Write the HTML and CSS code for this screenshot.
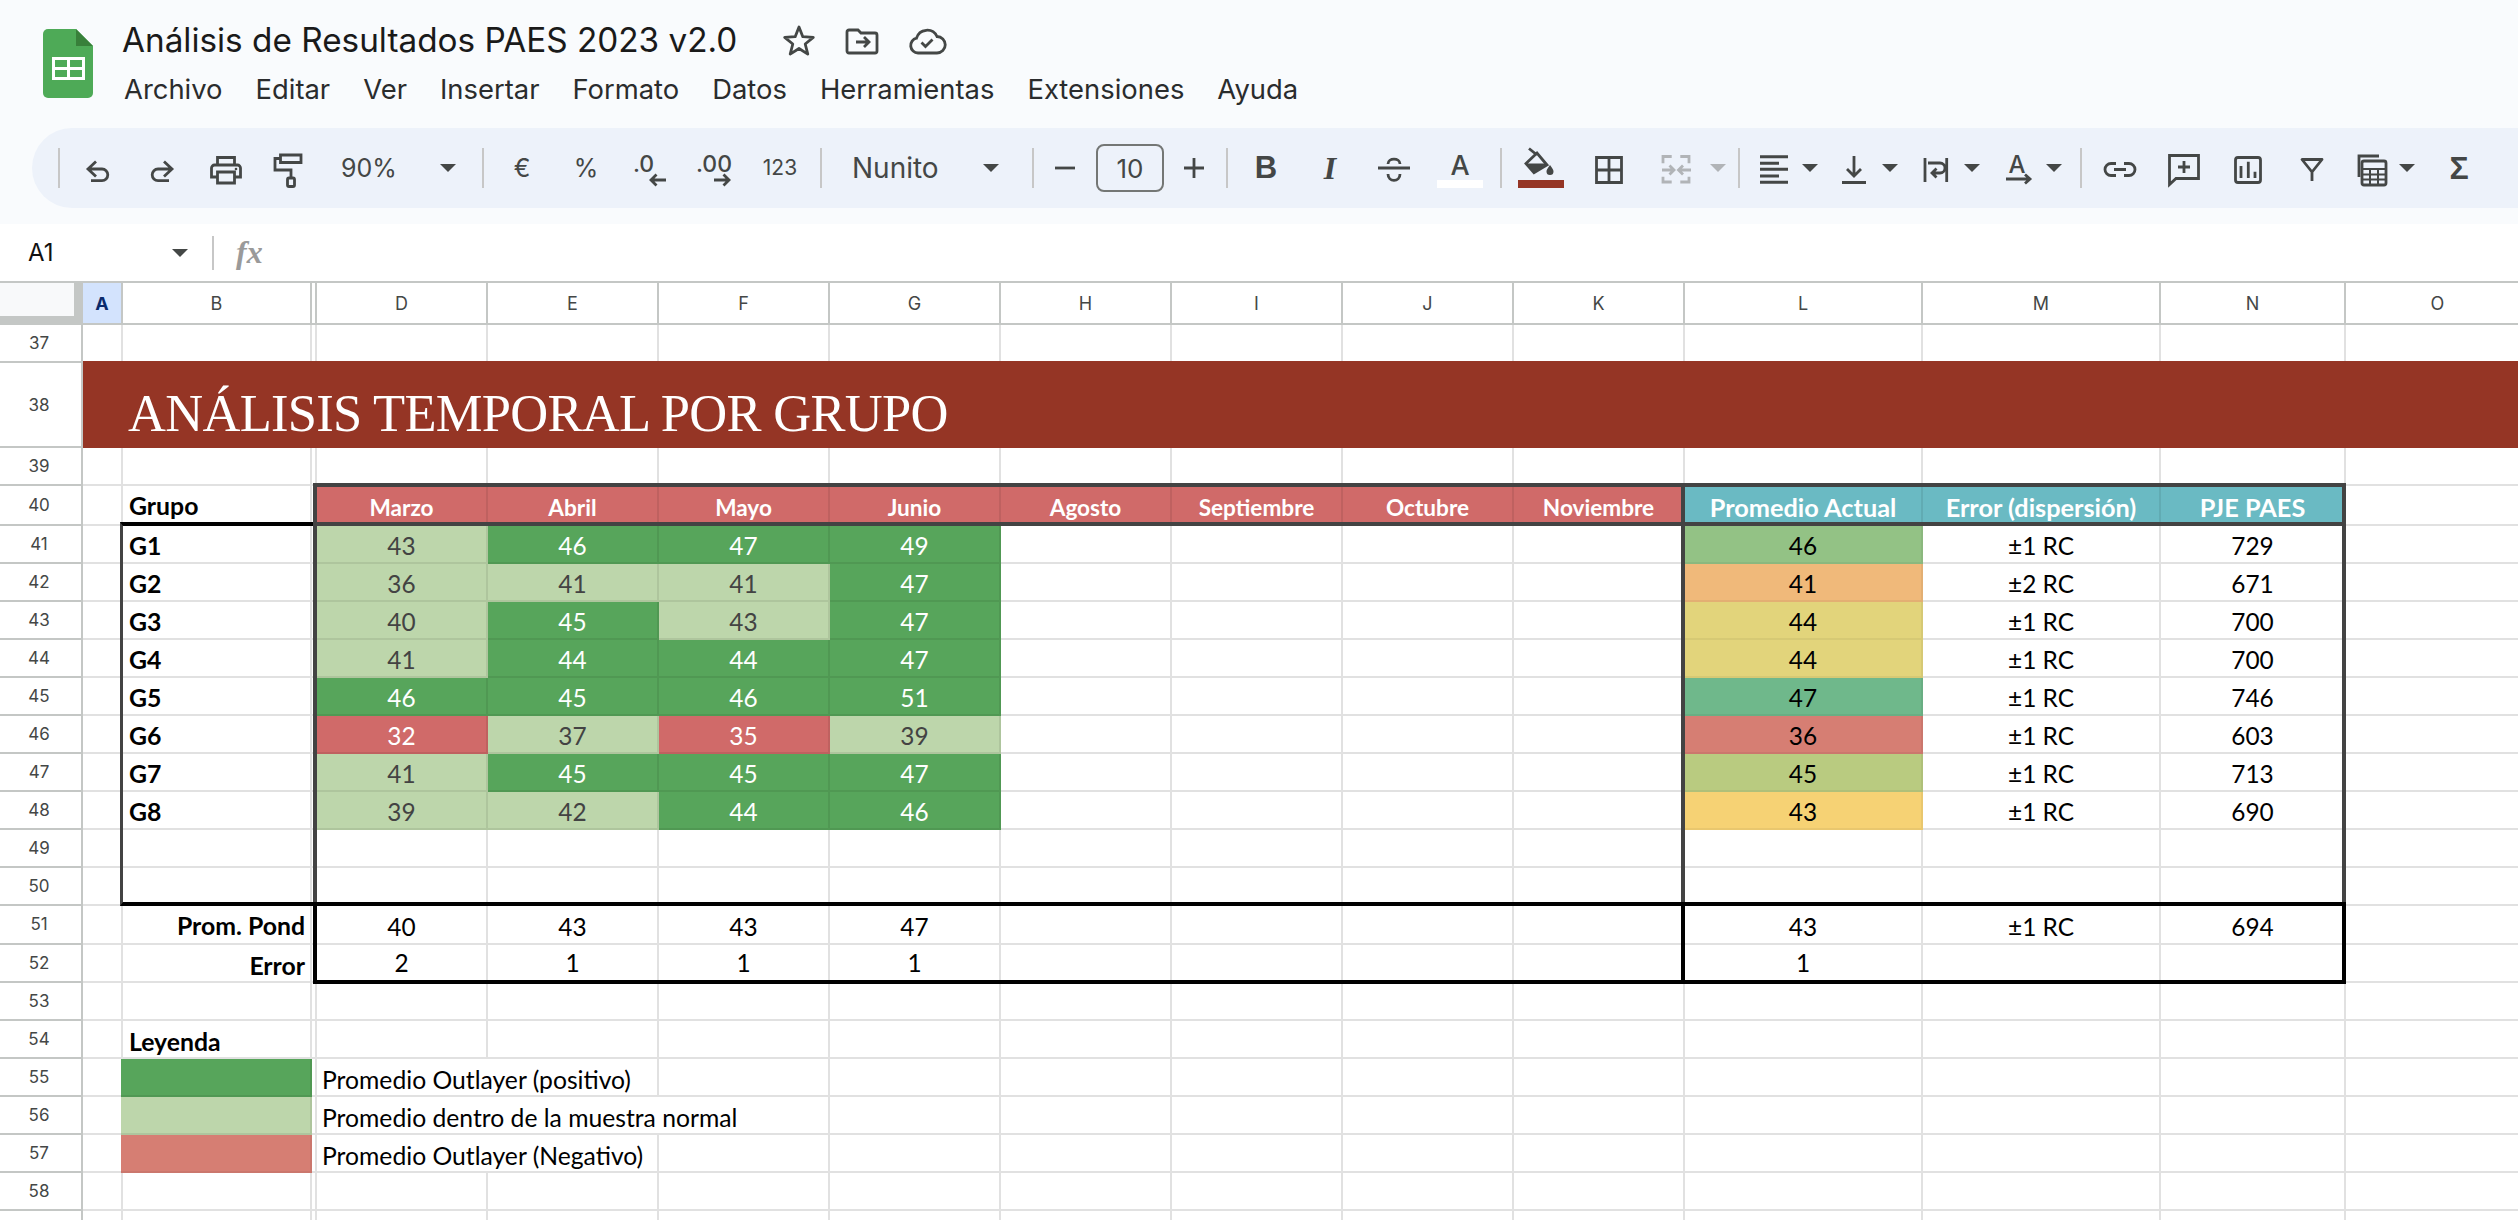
FILE: index.html
```html
<!DOCTYPE html>
<html lang="es">
<head>
<meta charset="utf-8">
<title>Análisis de Resultados PAES 2023 v2.0</title>
<link rel="stylesheet" href="styles.css">
</head>
<body>
<header class="top">
  <div class="head">
    <svg class="logo" viewBox="0 0 50 69"><path d="M5 0H33L50 17V64a5 5 0 0 1-5 5H5a5 5 0 0 1-5-5V5a5 5 0 0 1 5-5Z" fill="#4eaa57"/><path d="M33 0L50 17H33Z" fill="#38803a"/><path d="M9 28H42V51H9ZM12 31V38H24V31ZM27 31V38H39V31ZM12 41V48H24V41ZM27 41V48H39V41Z" fill="#fff" fill-rule="evenodd"/></svg>
    <div class="headcol">
      <div class="titlerow">
        <h1 class="title">Análisis de Resultados PAES 2023 v2.0</h1>
        <div class="titleicons">
          <svg class="ic" viewBox="0 0 40 40"><path class="s" stroke-linejoin="round" d="M20 6 23.8 15.7 34.3 16.4 26.2 23 28.8 33.1 20 27.5 11.2 33.1 13.8 23 5.7 16.4 16.2 15.7Z"/></svg>
          <svg class="ic" viewBox="0 0 40 40"><path class="s" d="M4 11a2 2 0 0 1 2-2h9l3 3h14a2 2 0 0 1 2 2v16a2 2 0 0 1-2 2H6a2 2 0 0 1-2-2ZM13 21H26M21 16l5 5-5 5"/></svg>
          <svg class="ic" viewBox="0 0 40 40"><path class="s" d="M11 32a7.5 7.5 0 0 1-1.5-14.8A11 11 0 0 1 30 15.5a8 8 0 0 1 0 16.5ZM14.5 21.5l4 4 7-7"/></svg>
        </div>
      </div>
      <nav class="menu"><span>Archivo</span><span>Editar</span><span>Ver</span><span>Insertar</span><span>Formato</span><span>Datos</span><span>Herramientas</span><span>Extensiones</span><span>Ayuda</span></nav>
    </div>
  </div>
  <div class="toolbar">
    <i class="sep first"></i>
    <div class="ti"><svg class="ic" viewBox="0 0 40 40"><path class="s" d="M18 13.5 10 21 18 28.5M10 21H24a5.8 5.8 0 0 1 0 11.6H13"/></svg></div>
    <div class="ti"><svg class="ic" viewBox="0 0 40 40"><path class="s" d="M22 13.5 30 21 22 28.5M30 21H16a5.8 5.8 0 0 0 0 11.6H27"/></svg></div>
    <div class="ti"><svg class="ic" viewBox="0 0 40 40"><path class="s" d="M11.5 17V9.5H28.5V17M11 29H5.5V20a3 3 0 0 1 3-3H31.5a3 3 0 0 1 3 3V29H29M11.5 24H28.5V35H11.5Z"/><circle cx="30" cy="21" r="1.3" class="f"/></svg></div>
    <div class="ti"><svg class="ic" viewBox="0 0 40 40"><path class="s" d="M9.5 10.5H5V22H21V30M10.5 7H31V14.5H10.5Z"/><rect class="s" x="17.5" y="30" width="7" height="8.500" rx="1.500"/></svg></div>
    <div class="ti zoomi"><span class="tt">90%</span><i class="caret"></i></div>
    <i class="sep"></i>
    <div class="ti"><span class="tt">€</span></div>
    <div class="ti"><span class="tt">%</span></div>
    <div class="ti"><svg class="ic" viewBox="0 0 40 40"><text class="dec" x="3" y="24">.0</text><path class="s" d="M36 32H21M26.500 26.500 21 32l5.500 5.500"/></svg></div>
    <div class="ti"><svg class="ic" viewBox="0 0 40 40"><text class="dec" x="2" y="24">.00</text><path class="s" d="M20 32H35M29.500 26.500 35 32l-5.500 5.500"/></svg></div>
    <div class="ti w68"><span class="tt t123">123</span></div>
    <i class="sep"></i>
    <div class="ti fonti"><span class="tt tfont">Nunito</span><i class="caret"></i></div>
    <i class="sep"></i>
    <div class="ti w50"><svg class="ic" viewBox="0 0 40 40"><path class="s" d="M10 20H30"/></svg></div>
    <div class="sizebox">10</div>
    <div class="ti w52"><svg class="ic" viewBox="0 0 40 40"><path class="s" d="M10 20H30M20 10V30"/></svg></div>
    <i class="sep"></i>
    <div class="ti"><span class="tt tb">B</span></div>
    <div class="ti"><span class="tt ti-i">I</span></div>
    <div class="ti"><svg class="ic" viewBox="0 0 40 40"><path class="s" d="M4 20H36M14 16C14 9.500 26 9.500 26 16M14 26C14 34.500 26 34.500 26 26"/></svg></div>
    <div class="ti w68"><svg class="ic wide" viewBox="0 0 46 40"><text class="lett" x="23" y="27">A</text><rect class="white" x="0" y="32" width="46" height="8"/></svg></div>
    <i class="sep"></i>
    <div class="ti w66"><svg class="ic wide" viewBox="0 0 46 40"><path class="s" d="M11 .5 19 7M8 15.500 19 5 29 17 16 24.700Z"/><path class="f" d="M8 15.500H29L16 24.700Z M32 17c-2.500 3.500-3.500 5-3.500 6.500a3.500 3.500 0 0 0 7 0c0-1.500-1-3-3.500-6.500Z"/><rect class="brick" x="0" y="32" width="46" height="8"/></svg></div>
    <div class="ti w70"><svg class="ic" viewBox="0 0 40 40"><path class="s" d="M7.500 9.500H32.500V34.500H7.500ZM20 9.500V34.500M7.500 22H32.500"/></svg></div>
    <div class="ti w88 cap-merge"><svg class="ic muted" viewBox="0 0 40 40"><path class="s" d="M15.700 8.500H7V15.300M24.300 8.500H33V15.300M15.700 34H7V28.700M24.300 34H33V28.700M6 22H18M13.500 17.500 18 22l-4.500 4.500M35 22H22.500M27 17.500 22.500 22l4.500 4.500"/></svg><i class="caret muted-c"></i></div>
    <i class="sep"></i>
    <div class="ti w80 cap-item"><svg class="ic" viewBox="0 0 40 40"><path class="s thick" d="M6 8.700H34M6 15.300H25M6 21.300H34M6 28H25M6 34.300H34"/></svg><i class="caret"></i></div>
    <div class="ti w82 cap-item"><svg class="ic" viewBox="0 0 40 40"><path class="s" d="M20 8V28M13 21l7 7 7-7M8 34.500H32"/></svg><i class="caret"></i></div>
    <div class="ti w82 cap-item"><svg class="ic" viewBox="0 0 40 40"><path class="s" d="M9 10V34M30.700 10V34M12 15H24a5 5 0 0 1 0 10H17M20.500 20.500 16 25l4.500 4.500"/></svg><i class="caret"></i></div>
    <div class="ti w84 cap-item"><svg class="ic" viewBox="0 0 40 40"><text class="lett small" x="19" y="25">A</text><path class="s" d="M8 31H31M27 26.500 32 31l-5 4.500"/></svg><i class="caret"></i></div>
    <i class="sep"></i>
    <div class="ti"><svg class="ic" viewBox="0 0 40 40"><path class="s" d="M16 15.500H11a6 6 0 0 0 0 12H16M24 15.500H29a6 6 0 0 1 0 12H24M14 21.500H26"/></svg></div>
    <div class="ti"><svg class="ic" viewBox="0 0 40 40"><path class="s" d="M5.500 7.500H34.500V30.500H12L5.500 36.500ZM20 13V25M14 19H26"/></svg></div>
    <div class="ti"><svg class="ic" viewBox="0 0 40 40"><rect class="s" x="7.500" y="9.500" width="25" height="25" rx="2.500"/><path class="s" d="M13 18V30M20.300 13.700V30M27 23.700V30"/></svg></div>
    <div class="ti"><svg class="ic" viewBox="0 0 40 40"><path class="s" stroke-linejoin="round" d="M10 11.500H30L20 24ZM20 24V33"/></svg></div>
    <div class="ti w80 cap-calc"><svg class="ic" viewBox="0 0 40 40"><path class="s" d="M28 8H8V29"/><rect class="s" x="11" y="13" width="24" height="24" rx="2"/><path class="s thin" d="M11 21H35M11 26.500H35M11 31.500H35M19 21V37M27 21V37"/></svg><i class="caret"></i></div>
    <div class="ti w70"><span class="tt sigma">Σ</span></div>
  </div>
</header>

<div class="fbar">
  <div class="namebox"><span>A1</span><i class="caret"></i></div>
  <i class="sep fsep"></i>
  <span class="fx">fx</span>
</div>

<main class="sheet">
  <div class="grid">
    <div class="row hdr">
      <div class="corner"></div>
      <div class="ch sel">A</div><div class="ch">B</div><div class="ch"></div><div class="ch">D</div><div class="ch">E</div><div class="ch">F</div><div class="ch">G</div><div class="ch">H</div><div class="ch">I</div><div class="ch">J</div><div class="ch">K</div><div class="ch">L</div><div class="ch">M</div><div class="ch">N</div><div class="ch">O</div>
    </div>
    <div class="row"><div class="rh">37</div><div class="c"></div><div class="c"></div><div class="c"></div><div class="c"></div><div class="c"></div><div class="c"></div><div class="c"></div><div class="c"></div><div class="c"></div><div class="c"></div><div class="c"></div><div class="c"></div><div class="c"></div><div class="c"></div><div class="c"></div></div>
    <div class="row"><div class="rh">38</div><div class="band">ANÁLISIS TEMPORAL POR GRUPO</div></div>
    <div class="row"><div class="rh">39</div><div class="c"></div><div class="c"></div><div class="c"></div><div class="c"></div><div class="c"></div><div class="c"></div><div class="c"></div><div class="c"></div><div class="c"></div><div class="c"></div><div class="c"></div><div class="c"></div><div class="c"></div><div class="c"></div><div class="c"></div></div>
    <div class="row"><div class="rh">40</div><div class="c"></div><div class="c lbl grupo">Grupo</div><div class="c"></div><div class="c hr">Marzo</div><div class="c hr">Abril</div><div class="c hr">Mayo</div><div class="c hr">Junio</div><div class="c hr">Agosto</div><div class="c hr">Septiembre</div><div class="c hr">Octubre</div><div class="c hr">Noviembre</div><div class="c ht">Promedio Actual</div><div class="c ht">Error (dispersión)</div><div class="c ht">PJE PAES</div><div class="c"></div></div>

    <div class="row"><div class="rh">41</div><div class="c"></div><div class="c lbl">G1</div><div class="c"></div><div class="c n lg">43</div><div class="c n g">46</div><div class="c n g">47</div><div class="c n g">49</div><div class="c"></div><div class="c"></div><div class="c"></div><div class="c"></div><div class="c n h46">46</div><div class="c n">±1 RC</div><div class="c n">729</div><div class="c"></div></div>
    <div class="row"><div class="rh">42</div><div class="c"></div><div class="c lbl">G2</div><div class="c"></div><div class="c n lg">36</div><div class="c n lg">41</div><div class="c n lg">41</div><div class="c n g">47</div><div class="c"></div><div class="c"></div><div class="c"></div><div class="c"></div><div class="c n h41">41</div><div class="c n">±2 RC</div><div class="c n">671</div><div class="c"></div></div>
    <div class="row"><div class="rh">43</div><div class="c"></div><div class="c lbl">G3</div><div class="c"></div><div class="c n lg">40</div><div class="c n g">45</div><div class="c n lg">43</div><div class="c n g">47</div><div class="c"></div><div class="c"></div><div class="c"></div><div class="c"></div><div class="c n h44">44</div><div class="c n">±1 RC</div><div class="c n">700</div><div class="c"></div></div>
    <div class="row"><div class="rh">44</div><div class="c"></div><div class="c lbl">G4</div><div class="c"></div><div class="c n lg">41</div><div class="c n g">44</div><div class="c n g">44</div><div class="c n g">47</div><div class="c"></div><div class="c"></div><div class="c"></div><div class="c"></div><div class="c n h44">44</div><div class="c n">±1 RC</div><div class="c n">700</div><div class="c"></div></div>
    <div class="row"><div class="rh">45</div><div class="c"></div><div class="c lbl">G5</div><div class="c"></div><div class="c n g">46</div><div class="c n g">45</div><div class="c n g">46</div><div class="c n g">51</div><div class="c"></div><div class="c"></div><div class="c"></div><div class="c"></div><div class="c n h47">47</div><div class="c n">±1 RC</div><div class="c n">746</div><div class="c"></div></div>
    <div class="row"><div class="rh">46</div><div class="c"></div><div class="c lbl">G6</div><div class="c"></div><div class="c n rd">32</div><div class="c n lg">37</div><div class="c n rd">35</div><div class="c n lg">39</div><div class="c"></div><div class="c"></div><div class="c"></div><div class="c"></div><div class="c n h36">36</div><div class="c n">±1 RC</div><div class="c n">603</div><div class="c"></div></div>
    <div class="row"><div class="rh">47</div><div class="c"></div><div class="c lbl">G7</div><div class="c"></div><div class="c n lg">41</div><div class="c n g">45</div><div class="c n g">45</div><div class="c n g">47</div><div class="c"></div><div class="c"></div><div class="c"></div><div class="c"></div><div class="c n h45">45</div><div class="c n">±1 RC</div><div class="c n">713</div><div class="c"></div></div>
    <div class="row"><div class="rh">48</div><div class="c"></div><div class="c lbl">G8</div><div class="c"></div><div class="c n lg">39</div><div class="c n lg">42</div><div class="c n g">44</div><div class="c n g">46</div><div class="c"></div><div class="c"></div><div class="c"></div><div class="c"></div><div class="c n h43">43</div><div class="c n">±1 RC</div><div class="c n">690</div><div class="c"></div></div>
    <div class="row"><div class="rh">49</div><div class="c"></div><div class="c"></div><div class="c"></div><div class="c"></div><div class="c"></div><div class="c"></div><div class="c"></div><div class="c"></div><div class="c"></div><div class="c"></div><div class="c"></div><div class="c"></div><div class="c"></div><div class="c"></div><div class="c"></div></div>
    <div class="row"><div class="rh">50</div><div class="c"></div><div class="c"></div><div class="c"></div><div class="c"></div><div class="c"></div><div class="c"></div><div class="c"></div><div class="c"></div><div class="c"></div><div class="c"></div><div class="c"></div><div class="c"></div><div class="c"></div><div class="c"></div><div class="c"></div></div>
    <div class="row"><div class="rh">51</div><div class="c"></div><div class="c lbl right">Prom. Pond</div><div class="c"></div><div class="c n">40</div><div class="c n">43</div><div class="c n">43</div><div class="c n">47</div><div class="c"></div><div class="c"></div><div class="c"></div><div class="c"></div><div class="c n">43</div><div class="c n">±1 RC</div><div class="c n">694</div><div class="c"></div></div>
    <div class="row"><div class="rh">52</div><div class="c"></div><div class="c lbl right low">Error</div><div class="c"></div><div class="c n mid">2</div><div class="c n mid">1</div><div class="c n mid">1</div><div class="c n mid">1</div><div class="c"></div><div class="c"></div><div class="c"></div><div class="c"></div><div class="c n mid">1</div><div class="c"></div><div class="c"></div><div class="c"></div></div>
    <div class="row"><div class="rh">53</div><div class="c"></div><div class="c"></div><div class="c"></div><div class="c"></div><div class="c"></div><div class="c"></div><div class="c"></div><div class="c"></div><div class="c"></div><div class="c"></div><div class="c"></div><div class="c"></div><div class="c"></div><div class="c"></div><div class="c"></div></div>
    <div class="row"><div class="rh">54</div><div class="c"></div><div class="c lbl ley">Leyenda</div><div class="c"></div><div class="c"></div><div class="c"></div><div class="c"></div><div class="c"></div><div class="c"></div><div class="c"></div><div class="c"></div><div class="c"></div><div class="c"></div><div class="c"></div><div class="c"></div><div class="c"></div></div>
    <div class="row"><div class="rh">55</div><div class="c"></div><div class="c g swatch"></div><div class="c"></div><div class="c txt span2">Promedio Outlayer (positivo)</div><div class="c"></div><div class="c"></div><div class="c"></div><div class="c"></div><div class="c"></div><div class="c"></div><div class="c"></div><div class="c"></div><div class="c"></div><div class="c"></div></div>
    <div class="row"><div class="rh">56</div><div class="c"></div><div class="c lg swatch"></div><div class="c"></div><div class="c txt span3">Promedio dentro de la muestra normal</div><div class="c"></div><div class="c"></div><div class="c"></div><div class="c"></div><div class="c"></div><div class="c"></div><div class="c"></div><div class="c"></div><div class="c"></div></div>
    <div class="row"><div class="rh">57</div><div class="c"></div><div class="c h36 swatch"></div><div class="c"></div><div class="c txt span2">Promedio Outlayer (Negativo)</div><div class="c"></div><div class="c"></div><div class="c"></div><div class="c"></div><div class="c"></div><div class="c"></div><div class="c"></div><div class="c"></div><div class="c"></div><div class="c"></div></div>
    <div class="row"><div class="rh">58</div><div class="c"></div><div class="c"></div><div class="c"></div><div class="c"></div><div class="c"></div><div class="c"></div><div class="c"></div><div class="c"></div><div class="c"></div><div class="c"></div><div class="c"></div><div class="c"></div><div class="c"></div><div class="c"></div><div class="c"></div></div>
    <div class="row"><div class="rh"></div><div class="c"></div><div class="c"></div><div class="c"></div><div class="c"></div><div class="c"></div><div class="c"></div><div class="c"></div><div class="c"></div><div class="c"></div><div class="c"></div><div class="c"></div><div class="c"></div><div class="c"></div><div class="c"></div><div class="c"></div></div>
  </div>
  <div class="overlay">
    <div class="b-side"></div>
    <div class="b-d"></div>
    <div class="b-l"></div>
    <div class="b-foot"></div>
    <div class="b-foot-l"></div>
    <div class="b-head-d"></div>
    <div class="b-head-l"></div>
  </div>
</main>
</body>
</html>
```

FILE: styles.css
```css
:root {
  --ink: #444746;
  --cols: 83px 40px 189px 5px repeat(8, 171px) 238px 238px 185px 185px;
  --rows: 44px 38px 85px 38px 39.5px repeat(18, 38.1px) 38px;
  --ui: "Inter", "Liberation Sans", sans-serif;
  --cell: "Lato", "Noto Sans", sans-serif;
}
* { box-sizing: border-box; }
html, body { margin: 0; height: 100%; overflow: hidden; background: #fff; }
body { font-family: var(--ui); color: #1f1f1f; }
i { display: block; }

.top { background: #f9fbfd; height: 224px; }
.head { display: flex; height: 128px; padding: 29px 0 0 43px; gap: 29px; }
.logo { width: 50px; height: 69px; flex: none; }
.headcol { display: flex; flex-direction: column; }
.titlerow { display: flex; align-items: center; height: 40px; margin-top: -9px; }
.title { margin: 0; font-size: 33.3px; line-height: 40px; font-weight: 400; color: #1a1a1a; white-space: nowrap; }
.titleicons { display: flex; gap: 24px; margin: 1px 0 0 42px; }
.menu { display: flex; gap: 33px; margin-top: 11px; margin-left: 2px; font-size: 27.4px; line-height: 36px; color: #2a2c2d; white-space: nowrap; }

.ic { width: 40px; height: 40px; flex: none; overflow: visible; }
.ic.wide { width: 46px; }
.s { fill: none; stroke: var(--ink); stroke-width: 2.8; }
.s.thick { stroke-width: 3; }
.s.thin { stroke-width: 2; }
.f { fill: var(--ink); }
.muted .s { stroke: #b1b4b7; }
.white { fill: #fff; }
.brick { fill: #953525; }
.dec { font-family: var(--ui); font-size: 23px; font-weight: 500; fill: var(--ink); }
.lett { font-family: var(--ui); font-size: 27px; font-weight: 500; fill: var(--ink); text-anchor: middle; }
.lett.small { font-size: 24px; }

.toolbar { display: flex; align-items: center; height: 80px; margin-left: 32px; padding-left: 26px; background: #edf2fa; border-radius: 40px 0 0 40px; color: var(--ink); }
.sep { width: 2px; height: 40px; margin: 0 6px; background: #c7c7c7; flex: none; }
.sep.first { margin-left: 0; }
.ti { width: 64px; height: 40px; display: flex; align-items: center; justify-content: center; flex: none; }
.w50 { width: 50px; } .w52 { width: 52px; } .w66 { width: 66px; } .w68 { width: 68px; } .w70 { width: 70px; }
.w80 { width: 80px; } .w82 { width: 82px; } .w84 { width: 84px; } .w88 { width: 88px; }
.tt { font-size: 25px; line-height: 40px; }
.t123 { font-size: 21px; }
.tfont { font-size: 28px; }
.tb { font-family: "Liberation Sans", sans-serif; font-weight: 700; font-size: 31px; }
.ti-i { font-family: "Liberation Serif", serif; font-weight: 700; font-style: italic; font-size: 32px; }
.sigma { font-family: "Liberation Sans", sans-serif; font-weight: 700; font-size: 32px; }
.caret { width: 0; height: 0; border: 8px solid transparent; border-top-color: var(--ink); border-bottom-width: 0; flex: none; }
.muted-c { border-top-color: #b1b4b7; }
.zoomi { width: 154px; justify-content: flex-start; padding-left: 19px; gap: 43px; }
.fonti { width: 198px; justify-content: flex-start; padding-left: 24px; gap: 44px; }
.sizebox { width: 68px; height: 48px; margin: 0 4px 0 6px; border: 2px solid #747775; border-radius: 8px; display: flex; align-items: center; justify-content: center; font-size: 26px; color: var(--ink); flex: none; }
.cap-item { justify-content: flex-start; gap: 0; padding-left: 8px; }
.cap-item .caret { margin-left: 8px; }
.cap-merge { justify-content: flex-start; padding-left: 12px; }
.cap-merge .caret { margin-left: 14px; }
.cap-calc { justify-content: flex-start; padding-left: 7px; }
.cap-calc .caret { margin-left: 8px; }

.fbar { display: flex; align-items: center; height: 57px; background: #fff; }
.namebox { width: 188px; padding-left: 28px; display: flex; align-items: center; justify-content: space-between; font-size: 24px; color: #111; }
.fsep { height: 34px; margin: 0 0 0 24px; }
.fx { margin: -2px 0 0 22px; font-family: "Liberation Serif", serif; font-style: italic; font-weight: 700; font-size: 32px; color: #9a9a9a; line-height: 1; }

.sheet { position: relative; height: 939px; overflow: hidden; background: #fff; }
.grid, .overlay { display: grid; grid-template-columns: var(--cols); grid-template-rows: var(--rows); }
.overlay { position: absolute; inset: 0; pointer-events: none; }
.row { display: contents; }

.corner { background: #f8f9fa; border-top: 2px solid #c4c7c5; border-right: 9px solid #c4c7c5; border-bottom: 9px solid #c4c7c5; }
.ch { display: flex; align-items: center; justify-content: center; border-top: 2px solid #c4c7c5; border-right: 2px solid #c4c7c5; border-bottom: 2px solid #c4c7c5; font-size: 18px; color: var(--ink); }
.ch.sel { background: #d3e3fd; color: #0b2a6b; font-weight: 700; }

.rh { display: flex; align-items: center; justify-content: center; padding-right: 3px; border-right: 2px solid #c4c7c5; border-bottom: 2px solid #c4c7c5; font-size: 17px; color: var(--ink); }

.c { display: flex; align-items: flex-end; justify-content: center; min-width: 0; white-space: nowrap; padding-bottom: 2px; border-right: 2px solid #e1e1e1; border-bottom: 2px solid #e1e1e1; font-family: var(--cell); font-size: 24.4px; line-height: 29px; color: #000; }
.lbl { justify-content: flex-start; padding-left: 6px; font-weight: 700; font-size: 24.8px; }
.grupo { padding-bottom: 4px; }
.ley { padding-bottom: 1px; }
.lbl.right { justify-content: flex-end; padding: 0 5px 3px 0; }
.lbl.right.low { padding-bottom: 1px; }
.n.mid { padding-bottom: 4px; }
.txt { justify-content: flex-start; padding-left: 5px; padding-bottom: 1px; font-size: 24.7px; }
.span2 { grid-column: span 2; }
.span3 { grid-column: span 3; }
.swatch { margin-left: -2px; }

.band { grid-column: 2 / -1; margin-top: -2px; display: flex; align-items: flex-end; padding: 0 0 3px 45px; background: #953525; color: #fff; font-family: "Liberation Serif", serif; font-size: 52.5px; letter-spacing: -.7px; line-height: 64px; }

.hr { padding-bottom: 2px; background: #d06a69; border-color: rgba(0,0,0,.08); color: #fff; font-weight: 700; font-size: 22.6px; }
.ht { padding-bottom: 2px; background: #6abac3; border-color: rgba(0,0,0,.08); color: #fff; font-weight: 700; font-size: 25.3px; }
.g { background: #57a55b; border-color: rgba(0,0,0,.08); color: #fff; }
.lg { background: #bdd6ab; border-color: rgba(0,0,0,.08); color: #434343; }
.rd { background: #d06a69; border-color: rgba(0,0,0,.08); color: #fff; }
.h46 { background: #93c285; border-color: rgba(0,0,0,.05); }
.h41 { background: #f0b97a; border-color: rgba(0,0,0,.05); }
.h44 { background: #e2d47b; border-color: rgba(0,0,0,.05); }
.h47 { background: #6fb88b; border-color: rgba(0,0,0,.05); }
.h36 { background: #d67e73; border-color: rgba(0,0,0,.05); }
.h45 { background: #b9cb80; border-color: rgba(0,0,0,.05); }
.h43 { background: #f6d274; border-color: rgba(0,0,0,.05); }

.b-side { grid-column: 3 / 5; grid-row: 6 / 16; margin: -4px 0 0 -3px; border-left: 3px solid #434343; border-top: 4px solid #000; border-bottom: 4px solid #000; }
.b-d { grid-column: 5 / 13; grid-row: 6 / 16; margin-left: -4px; border-left: 4px solid #434343; }
.b-l { grid-column: 13 / 16; grid-row: 6 / 16; margin-left: -4px; border-left: 4px solid #434343; border-right: 4px solid #434343; }
.b-foot { grid-column: 5 / 16; grid-row: 16 / 18; margin: -4px 0 -1px -4px; border: 4px solid #000; }
.b-foot-l { grid-column: 13 / 16; grid-row: 16 / 18; margin: -1px 0 -1px -4px; border-left: 4px solid #000; }
.b-head-d { grid-column: 5 / 13; grid-row: 5; margin: -3px 0 0 -4px; border: 4px solid #434343; }
.b-head-l { grid-column: 13 / 16; grid-row: 5; margin: -3px 0 0 -4px; border: 4px solid #434343; }
```
